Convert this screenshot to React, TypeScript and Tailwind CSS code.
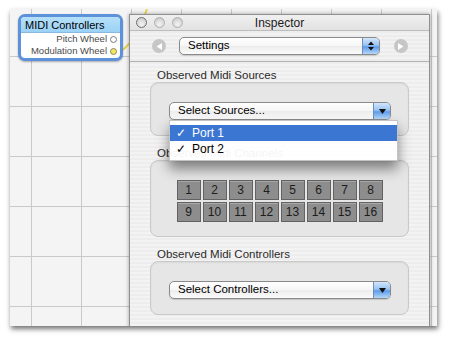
import React from "react";

const font = "font-['Liberation_Sans','Helvetica',sans-serif]";

function Triangle({ dir }: { dir: "down" | "left" | "right" }) {
  if (dir === "down")
    return (
      <svg width="7" height="5" viewBox="0 0 7 5">
        <path d="M0 0 L7 0 L3.5 5 Z" fill="#111" />
      </svg>
    );
  return (
    <svg width="6" height="7" viewBox="0 0 6 7">
      <path d={dir === "left" ? "M6 0 L6 7 L0.5 3.5 Z" : "M0 0 L0 7 L5.5 3.5 Z"} fill="#fff" />
    </svg>
  );
}

function Stepper() {
  return (
    <svg width="6" height="10" viewBox="0 0 6 10">
      <path d="M0 4 L6 4 L3 0.5 Z" fill="#111" />
      <path d="M0 6 L6 6 L3 9.5 Z" fill="#111" />
    </svg>
  );
}

function AquaPopup({ label, stepper, className }: { label: string; stepper?: boolean; className: string }) {
  return (
    <div
      className={`flex items-stretch rounded-[5px] border border-[#8a8a8a] bg-[linear-gradient(to_bottom,#ffffff_0%,#f6f6f6_50%,#ececec_51%,#fbfbfb_100%)] shadow-[0_1px_1px_rgba(0,0,0,0.15)] ${className}`}
    >
      <div className="flex-1 pl-[8px] text-[11.5px] leading-none text-black flex items-center">{label}</div>
      <div className="w-[17px] flex items-center justify-center border-l border-[#6d8fbd] rounded-r-[4px] bg-[linear-gradient(to_bottom,#d3e6fb_0%,#99c3f3_45%,#5d9ce9_55%,#b5d7f8_100%)]">
        {stepper ? <Stepper /> : <Triangle dir="down" />}
      </div>
    </div>
  );
}

function Circle({ dir }: { dir: "left" | "right" }) {
  return (
    <div className="w-[14px] h-[14px] rounded-full bg-[#c6c6c6] flex items-center justify-center">
      <Triangle dir={dir} />
    </div>
  );
}

function Light({ dark }: { dark?: boolean }) {
  return (
    <div
      className={`w-[11px] h-[11px] rounded-full border ${dark ? "border-[#6e6e6e]" : "border-[#b0b0b0]"} bg-[radial-gradient(circle_at_50%_70%,#f4f4f4_0%,#d8d8d8_60%,#bdbdbd_100%)]`}
    />
  );
}

function Section({ title, height, children }: { title: string; height: string; children: React.ReactNode }) {
  return (
    <div>
      <div className="h-[14px] leading-[14px] ml-[7px] text-[11.5px] text-[#2a2a2a]">{title}</div>
      <div className={`relative rounded-[8px] border border-[#c9c9c9] bg-[#e6e6e6] shadow-[inset_0_1px_2px_rgba(0,0,0,0.06)] ${height}`}>
        {children}
      </div>
    </div>
  );
}

const channels = Array.from({ length: 16 }, (_, i) => i + 1);

export default function App() {
  return (
    <div className={`w-[450px] h-[340px] bg-white pt-[9px] pl-[10px] ${font}`}>
      <div className="relative w-[427px] h-[317px] overflow-hidden bg-[#f4f4f4] bg-[linear-gradient(to_right,#c9c9c9_1px,transparent_1px),linear-gradient(to_bottom,#c9c9c9_1px,transparent_1px)] bg-[size:50px_50px] bg-[position:21px_47px] shadow-[1px_3px_5px_rgba(0,0,0,0.55)]">
        {/* wire */}
        <svg className="absolute inset-0" width="427" height="317">
          <path d="M107 43 C 118 42, 130 20, 137 0" stroke="#e6d44a" strokeWidth="2" fill="none" />
        </svg>

        {/* MIDI node */}
        <div className="absolute left-[8px] top-[5px] w-[105px] h-[47px] rounded-[7px] border-[3px] border-[#5d92da] bg-white overflow-hidden shadow-[0_1px_2px_rgba(0,0,0,0.3)]">
          <div className="h-[16px] bg-[linear-gradient(to_bottom,#b6e0fa,#9ad2f6)] border-b border-[#8bb8dc] pl-[4px] text-[11px] leading-[16px] text-black">
            MIDI Controllers
          </div>
          <div className="pr-[3px] pt-[0px] text-[9.5px] text-[#4a4a4a]">
            <div className="h-[12px] flex items-center justify-end gap-[3px]">
              <span>Pitch Wheel</span>
              <span className="w-[7px] h-[7px] rounded-full border border-[#7a7a7a] bg-white" />
            </div>
            <div className="h-[12px] flex items-center justify-end gap-[3px]">
              <span>Modulation Wheel</span>
              <span className="w-[7px] h-[7px] rounded-full border border-[#8a8a5a] bg-[#f2e466]" />
            </div>
          </div>
        </div>

        {/* Inspector window */}
        <div className="absolute left-[119px] top-[5px] w-[301px] h-[330px] flex flex-col border border-[#8f8f8f] bg-[#efefef] shadow-[0_0_4px_rgba(0,0,0,0.35)]">
          <div className="relative h-[16px] flex items-center gap-[7px] pl-[6px] border-b border-[#bdbdbd] bg-[linear-gradient(to_bottom,#f0f0f0,#e2e2e2)]">
            <Light dark />
            <Light />
            <Light />
            <div className="absolute inset-0 flex items-center justify-center text-[12px] text-[#1a1a1a]">Inspector</div>
          </div>
          <div className="h-[31px] flex items-center pl-[22px] border-b border-[#b3b3b3] bg-[repeating-linear-gradient(to_bottom,#ececec_0px,#ececec_2px,#f2f2f2_2px,#f2f2f2_4px)]">
            <Circle dir="left" />
            <AquaPopup label="Settings" stepper className="ml-[13px] w-[201px] h-[18px]" />
            <div className="ml-[14px]">
              <Circle dir="right" />
            </div>
          </div>
          <div className="flex-1 px-[20px] pt-[6px] flex flex-col gap-[10px] bg-[repeating-linear-gradient(to_bottom,#ededed_0px,#ededed_2px,#f3f3f3_2px,#f3f3f3_4px)]">
            <Section title="Observed Midi Sources" height="h-[54px]">
              <div className="relative ml-[18px] mt-[19px] w-[222px]">
                <AquaPopup label="Select Sources..." className="w-[222px] h-[18px]" />
                <div className="absolute left-0 top-full z-10 w-[229px] pt-[4px] pb-[3px] bg-white/95 border border-[#c4c4c4] shadow-[0_8px_12px_rgba(0,0,0,0.45)] text-[12px]">
                  <div className="h-[16px] flex items-center bg-[#3b76d3] text-white">
                    <span className="w-[22px] pl-[6px]">✓</span>
                    <span>Port 1</span>
                  </div>
                  <div className="h-[16px] flex items-center text-black">
                    <span className="w-[22px] pl-[6px]">✓</span>
                    <span>Port 2</span>
                  </div>
                </div>
              </div>
            </Section>
            <Section title="Observed Midi Channels" height="h-[77px]">
              <div className="mt-[19px] mx-auto w-[206px] grid grid-cols-8 gap-[2px]">
                {channels.map((n) => (
                  <div
                    key={n}
                    className="h-[20px] flex items-center justify-center bg-[#8d8d8d] border border-[#626262] shadow-[inset_0_1px_0_rgba(255,255,255,0.25)] text-[12px] text-[#1c1c1c]"
                  >
                    {n}
                  </div>
                ))}
              </div>
            </Section>
            <Section title="Observed Midi Controllers" height="h-[54px]">
              <div className="ml-[18px] mt-[19px]">
                <AquaPopup label="Select Controllers..." className="w-[222px] h-[18px]" />
              </div>
            </Section>
          </div>
        </div>
      </div>
    </div>
  );
}
